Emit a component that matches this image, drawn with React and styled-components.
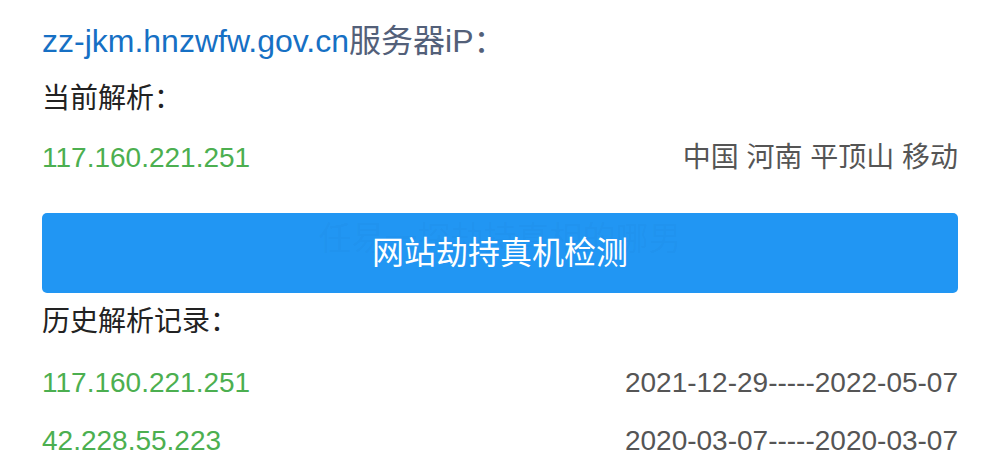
import React from "react";
import styled, { createGlobalStyle } from "styled-components";

const Global = createGlobalStyle`
  html, body { margin: 0; padding: 0; background: #fff; }
  body { font-family: "Liberation Sans", "Noto Sans CJK SC", sans-serif; }
`;

const Page = styled.div`
  width: 916px;
  padding: 0 27px 0 42px;
  display: flex;
  flex-direction: column;
`;

const Line = styled.div`
  height: ${(p) => p.$h}px;
  display: flex;
  align-items: center;
  justify-content: space-between;
  font-size: ${(p) => p.$size || 28}px;
  line-height: 1.2;
  white-space: nowrap;
`;

const Domain = styled.span`
  color: #1670c4;
`;

const Muted = styled.span`
  color: #536079;
`;

const Label = styled.span`
  color: #222;
`;

const Ip = styled.span`
  color: #4caf50;
`;

const Info = styled.span`
  color: #555;
`;

const CheckButton = styled.button`
  position: relative;
  margin-top: 13px;
  height: 80px;
  width: 100%;
  border: none;
  border-radius: 5px;
  background: #2196f3;
  color: #fff;
  font-family: "Liberation Sans", "Noto Sans CJK SC", sans-serif;
  font-size: 32px;
  line-height: 1.2;
  padding: 0;
  display: flex;
  align-items: center;
  justify-content: center;
  overflow: hidden;
  cursor: pointer;
`;

const Ghost = styled.span`
  position: absolute;
  left: 0;
  right: 0;
  top: 6px;
  text-align: center;
  color: rgba(20, 60, 140, 0.05);
  font-size: 33px;
  letter-spacing: 0px;
`;

const ButtonText = styled.span`
  position: relative;
`;

const History = styled.div`
  display: flex;
  flex-direction: column;
  margin-top: 3px;
`;

const history = [
  { ip: "117.160.221.251", range: "2021-12-29-----2022-05-07" },
  { ip: "42.228.55.223", range: "2020-03-07-----2020-03-07" },
];

export default function App() {
  return (
    <>
      <Global />
      <Page>
        <Line $h={82} $size={32}>
          <span>
            <Domain>zz-jkm.hnzwfw.gov.cn</Domain>
            <Muted>服务器iP：</Muted>
          </span>
        </Line>
        <Line $h={34}>
          <Label>当前解析：</Label>
        </Line>
        <Line $h={84}>
          <Ip>117.160.221.251</Ip>
          <Info>中国 河南 平顶山 移动</Info>
        </Line>
        <CheckButton>
          <Ghost>任易一探劫持真相的哪男</Ghost>
          <ButtonText>网站劫持真机检测</ButtonText>
        </CheckButton>
        <Line $h={58}>
          <Label>历史解析记录：</Label>
        </Line>
        <History>
          {history.map((h) => (
            <Line $h={58} key={h.ip}>
              <Ip>{h.ip}</Ip>
              <Info>{h.range}</Info>
            </Line>
          ))}
        </History>
      </Page>
    </>
  );
}
